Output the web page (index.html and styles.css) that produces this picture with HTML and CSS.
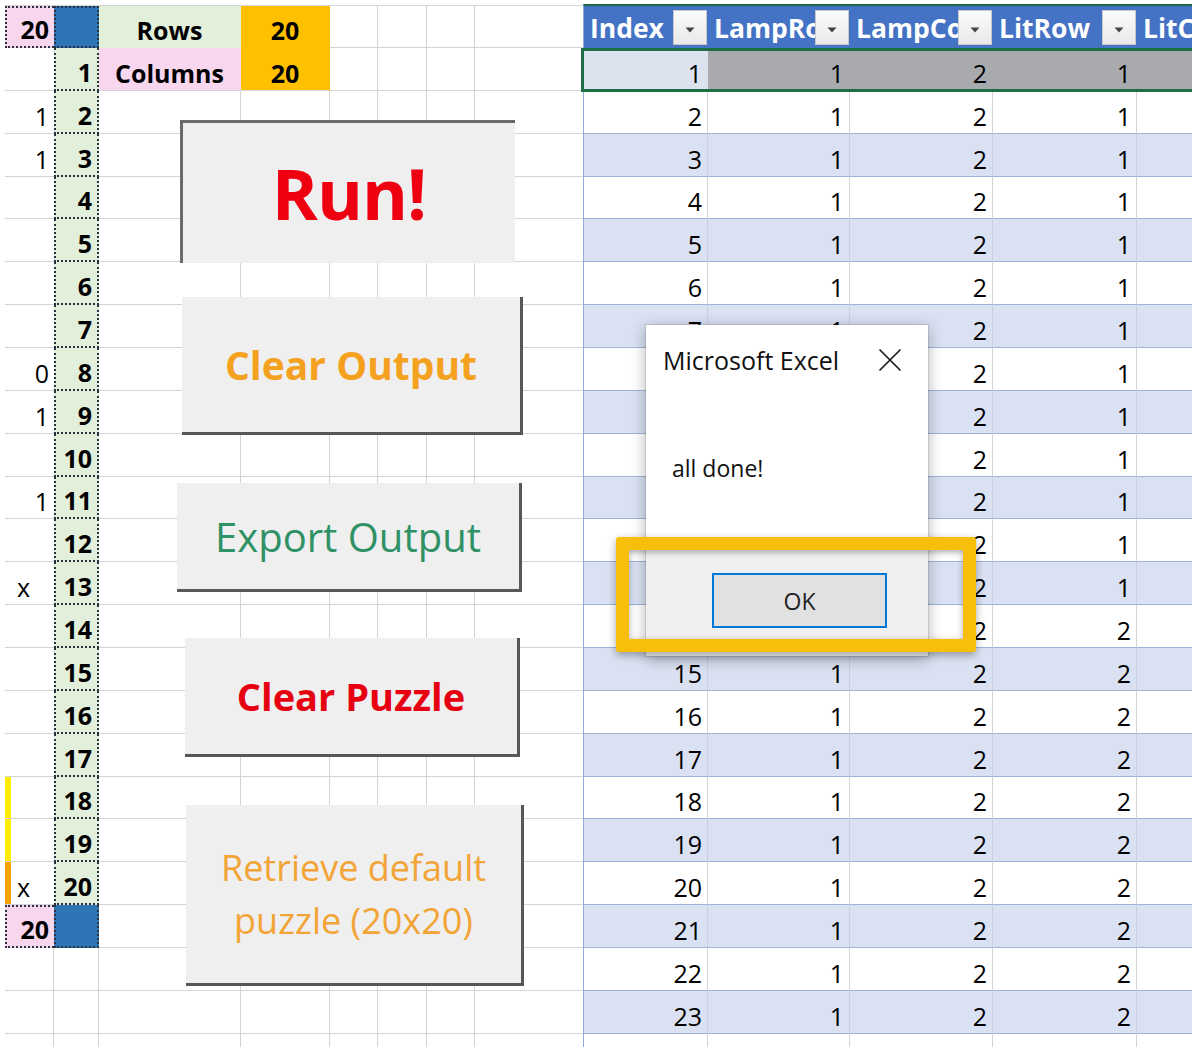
FILE: index.html
```html
<!DOCTYPE html>
<html lang="en">
<head>
<meta charset="utf-8">
<title>Lamp puzzle solver</title>
<link rel="stylesheet" href="styles.css">
</head>
<body>
<div class="stage">
  <div class="sheet">
    <div class="left">
      <div class="lrow top"><span class="pk pt nr">20</span><span class="p pt blu"></span><span class="lg">Rows</span><span class="gold t">20</span><span></span><span></span><span></span><span></span></div>
      <div class="lrow"><span class="nr"></span><span class="p">1</span><span class="lp">Columns</span><span class="gold">20</span><span></span><span></span><span></span><span></span></div>
      <div class="lrow"><span class="nr">1</span><span class="p">2</span><span></span><span></span><span></span><span></span><span></span><span></span></div>
      <div class="lrow"><span class="nr">1</span><span class="p">3</span><span></span><span></span><span></span><span></span><span></span><span></span></div>
      <div class="lrow"><span class="nr"></span><span class="p">4</span><span></span><span></span><span></span><span></span><span></span><span></span></div>
      <div class="lrow"><span class="nr"></span><span class="p">5</span><span></span><span></span><span></span><span></span><span></span><span></span></div>
      <div class="lrow"><span class="nr"></span><span class="p">6</span><span></span><span></span><span></span><span></span><span></span><span></span></div>
      <div class="lrow"><span class="nr"></span><span class="p">7</span><span></span><span></span><span></span><span></span><span></span><span></span></div>
      <div class="lrow"><span class="nr">0</span><span class="p">8</span><span></span><span></span><span></span><span></span><span></span><span></span></div>
      <div class="lrow"><span class="nr">1</span><span class="p">9</span><span></span><span></span><span></span><span></span><span></span><span></span></div>
      <div class="lrow"><span class="nr"></span><span class="p">10</span><span></span><span></span><span></span><span></span><span></span><span></span></div>
      <div class="lrow"><span class="nr">1</span><span class="p">11</span><span></span><span></span><span></span><span></span><span></span><span></span></div>
      <div class="lrow"><span class="nr"></span><span class="p">12</span><span></span><span></span><span></span><span></span><span></span><span></span></div>
      <div class="lrow"><span class="nr x">x</span><span class="p">13</span><span></span><span></span><span></span><span></span><span></span><span></span></div>
      <div class="lrow"><span class="nr"></span><span class="p">14</span><span></span><span></span><span></span><span></span><span></span><span></span></div>
      <div class="lrow"><span class="nr"></span><span class="p">15</span><span></span><span></span><span></span><span></span><span></span><span></span></div>
      <div class="lrow"><span class="nr"></span><span class="p">16</span><span></span><span></span><span></span><span></span><span></span><span></span></div>
      <div class="lrow"><span class="nr"></span><span class="p">17</span><span></span><span></span><span></span><span></span><span></span><span></span></div>
      <div class="lrow"><span class="nr yb"></span><span class="p">18</span><span></span><span></span><span></span><span></span><span></span><span></span></div>
      <div class="lrow"><span class="nr yb"></span><span class="p">19</span><span></span><span></span><span></span><span></span><span></span><span></span></div>
      <div class="lrow"><span class="nr ob x">x</span><span class="p">20</span><span></span><span></span><span></span><span></span><span></span><span></span></div>
      <div class="lrow"><span class="pk pt nr">20</span><span class="p blu"></span><span></span><span></span><span></span><span></span><span></span><span></span></div>
      <div class="lrow"><span></span><span></span><span></span><span></span><span></span><span></span><span></span><span></span></div>
      <div class="lrow"><span></span><span></span><span></span><span></span><span></span><span></span><span></span><span></span></div>
      <div class="lrow end"><span></span><span></span><span></span><span></span><span></span><span></span><span></span><span></span></div>
    </div>

    <div class="tbl">
      <div class="thead">
        <div class="th"><span class="tl">Index</span><span class="dd"><svg width="10" height="6" viewBox="0 0 10 6"><path d="M0.5 0.5h9L5 5.5z" fill="#444"/></svg></span></div>
        <div class="th"><span class="tl">LampRow</span><span class="dd"><svg width="10" height="6" viewBox="0 0 10 6"><path d="M0.5 0.5h9L5 5.5z" fill="#444"/></svg></span></div>
        <div class="th"><span class="tl">LampCol</span><span class="dd"><svg width="10" height="6" viewBox="0 0 10 6"><path d="M0.5 0.5h9L5 5.5z" fill="#444"/></svg></span></div>
        <div class="th"><span class="tl">LitRow</span><span class="dd"><svg width="10" height="6" viewBox="0 0 10 6"><path d="M0.5 0.5h9L5 5.5z" fill="#444"/></svg></span></div>
        <div class="th"><span class="tl">LitCol</span><span class="dd"><svg width="10" height="6" viewBox="0 0 10 6"><path d="M0.5 0.5h9L5 5.5z" fill="#444"/></svg></span></div>
      </div>
      <div class="tr b sel"><span>1</span><span>1</span><span>2</span><span>1</span><span></span></div>
      <div class="tr"><span>2</span><span>1</span><span>2</span><span>1</span><span></span></div>
      <div class="tr b"><span>3</span><span>1</span><span>2</span><span>1</span><span></span></div>
      <div class="tr"><span>4</span><span>1</span><span>2</span><span>1</span><span></span></div>
      <div class="tr b"><span>5</span><span>1</span><span>2</span><span>1</span><span></span></div>
      <div class="tr"><span>6</span><span>1</span><span>2</span><span>1</span><span></span></div>
      <div class="tr b"><span>7</span><span>1</span><span>2</span><span>1</span><span></span></div>
      <div class="tr"><span>8</span><span>1</span><span>2</span><span>1</span><span></span></div>
      <div class="tr b"><span>9</span><span>1</span><span>2</span><span>1</span><span></span></div>
      <div class="tr"><span>10</span><span>1</span><span>2</span><span>1</span><span></span></div>
      <div class="tr b"><span>11</span><span>1</span><span>2</span><span>1</span><span></span></div>
      <div class="tr"><span>12</span><span>1</span><span>2</span><span>1</span><span></span></div>
      <div class="tr b"><span>13</span><span>1</span><span>2</span><span>1</span><span></span></div>
      <div class="tr"><span>14</span><span>1</span><span>2</span><span>2</span><span></span></div>
      <div class="tr b"><span>15</span><span>1</span><span>2</span><span>2</span><span></span></div>
      <div class="tr"><span>16</span><span>1</span><span>2</span><span>2</span><span></span></div>
      <div class="tr b"><span>17</span><span>1</span><span>2</span><span>2</span><span></span></div>
      <div class="tr"><span>18</span><span>1</span><span>2</span><span>2</span><span></span></div>
      <div class="tr b"><span>19</span><span>1</span><span>2</span><span>2</span><span></span></div>
      <div class="tr"><span>20</span><span>1</span><span>2</span><span>2</span><span></span></div>
      <div class="tr b"><span>21</span><span>1</span><span>2</span><span>2</span><span></span></div>
      <div class="tr"><span>22</span><span>1</span><span>2</span><span>2</span><span></span></div>
      <div class="tr b"><span>23</span><span>1</span><span>2</span><span>2</span><span></span></div>
      <div class="tr end"><span></span><span></span><span></span><span></span><span></span></div>
    </div>
  </div>

  <div class="shape run">Run!</div>
  <div class="shape clear-out">Clear Output</div>
  <div class="shape export">Export Output</div>
  <div class="shape clear-puz">Clear Puzzle</div>
  <div class="shape retrieve">Retrieve default<br>puzzle (20x20)</div>

  <div class="dialog">
    <div class="dlg-head">
      <span class="dlg-title">Microsoft Excel</span>
      <svg class="dlg-x" width="24" height="24" viewBox="0 0 24 24"><path d="M1.5 1.5L22.5 22.5M22.5 1.5L1.5 22.5" stroke="#1a1a1a" stroke-width="1.7" fill="none"/></svg>
    </div>
    <div class="dlg-msg">all done!</div>
    <div class="dlg-foot"><div class="ok">OK</div></div>
  </div>
  <div class="highlight"></div>
</div>
</body>
</html>
```
FILE: styles.css
```css
body {
  margin: 0;
  background: #fff;
  font-family: "Open Sans", "Liberation Sans", sans-serif;
  color: #000;
}

.stage {
  position: relative;
  width: 1202px;
  height: 1056px;
  overflow: hidden;
}

.sheet {
  display: flex;
  margin: 4px 0 0 5px;
  width: 1187px;
  height: 1043px;
  overflow: hidden;
}

/* ---------- left worksheet area ---------- */
.left {
  flex: none;
  width: 578px;
  margin-top: 1px;
  border-top: 1px solid #d4d4d4;
}

.lrow {
  display: flex;
  height: 42.86px;
}
.lrow.top { height: 42px; }
.lrow.end { height: 13px; }

.lrow > span {
  box-sizing: border-box;
  height: 100%;
  display: flex;
  align-items: flex-end;
  justify-content: flex-end;
  padding: 0 5px 2px 0;
  border-right: 1px solid #d4d4d4;
  border-bottom: 1px solid #d4d4d4;
  font-size: 25px;
  line-height: 30px;
  white-space: nowrap;
  overflow: hidden;
}
.lrow.end > span { border-bottom: none; }

.lrow > span:nth-child(1) { width: 49px; }
.lrow > span:nth-child(2) { width: 45px; }
.lrow > span:nth-child(3) { width: 142px; justify-content: center; padding-right: 0; }
.lrow > span:nth-child(4) { width: 89px; justify-content: center; padding-right: 0; }
.lrow > span:nth-child(5) { width: 48px; }
.lrow > span:nth-child(6) { width: 49px; }
.lrow > span:nth-child(7) { width: 48px; }
.lrow > span:nth-child(8) { width: 108px; border-right: none; }

.lrow > span.nr { border-right: none; }
.lrow > span.x { justify-content: flex-start; padding-left: 12px; }
.lrow > span.yb { box-shadow: inset 6px 0 0 #ffec00; }
.lrow > span.ob { box-shadow: inset 6px 0 0 #f5a300; }

.lrow > span.p {
  background: #e2efda;
  font-weight: 700;
  border-left: 2px dotted #2a3142;
  border-right: 2px dotted #2a3142;
  border-bottom: 2px dotted #2a3142;
}
.lrow > span.pt { border-top: 2px dotted #2a3142; }
.lrow > span.blu { background: #2e75b6; }

.lrow > span.pk {
  background: #f8d7ee;
  font-weight: 700;
  border-left: 2px dotted #2a3142;
  border-bottom: 2px dotted #2a3142;
}

.lrow > span.lg {
  background: #e2efda;
  font-weight: 700;
  border-right-color: transparent;
  border-bottom-color: transparent;
}
.lrow > span.lp {
  background: #f8d7ee;
  font-weight: 700;
  border-right-color: transparent;
}
.lrow > span.gold {
  background: #ffc000;
  font-weight: 700;
  border-right-color: transparent;
}
.lrow > span.gold.t { border-bottom-color: transparent; }

/* ---------- output table ---------- */
.tbl {
  flex: none;
  width: 700px;
  border-left: 1px solid #8ea9db;
  border-top: 2px solid #1e6b41;
}

.thead {
  display: flex;
  height: 42px;
  background: #4472c4;
}
.th {
  box-sizing: border-box;
  display: flex;
  align-items: flex-start;
  color: #fff;
  font-weight: 700;
  font-size: 26.5px;
  line-height: 30px;
}
.th:nth-child(1) { width: 124px; }
.th:nth-child(2) { width: 142px; }
.th:nth-child(3) { width: 143px; }
.th:nth-child(4) { width: 144px; }
.th:nth-child(5) { width: 143px; }

.tl {
  flex: 1;
  min-width: 0;
  overflow: hidden;
  white-space: nowrap;
  padding: 7px 0 0 6px;
}
.dd {
  flex: none;
  box-sizing: border-box;
  width: 34px;
  height: 35px;
  margin: 4px 1px 0 0;
  border: 1px solid #c8c8c8;
  background: linear-gradient(#fbfbfb, #e9e9e9);
  display: flex;
  align-items: center;
  justify-content: center;
  padding-top: 4px;
}

.tr {
  display: flex;
  height: 42.86px;
}
.tr.b { background: #d9e1f2; }
.tr.end { height: 13px; }

.tr > span {
  box-sizing: border-box;
  height: 100%;
  display: flex;
  align-items: flex-end;
  justify-content: flex-end;
  padding: 0 5px 2px 0;
  border-right: 1px solid #d4d4d4;
  border-bottom: 1px solid #9fb2d8;
  font-size: 25px;
  line-height: 30px;
}
.tr.b > span { border-right-color: #c8d0e2; }
.tr.end > span { border-bottom: none; }

.tr > span:nth-child(1) { width: 124px; }
.tr > span:nth-child(2) { width: 142px; }
.tr > span:nth-child(3) { width: 143px; }
.tr > span:nth-child(4) { width: 144px; }
.tr > span:nth-child(5) { width: 143px; }

.tr.sel { position: relative; }
.tr.sel > span { background: #a8aaae; border-right-color: #a8aaae; }
.tr.sel > span:first-child { background: #dce3ef; border-right-color: #dce3ef; }
.tr.sel::after {
  content: "";
  position: absolute;
  left: -3px;
  right: -10px;
  top: 0;
  bottom: -1px;
  border: 3px solid #1f6e43;
}

/* ---------- floating macro buttons (Excel shapes) ---------- */
.shape {
  position: absolute;
  box-sizing: border-box;
  background: #efefef;
  display: flex;
  align-items: center;
  justify-content: center;
  text-align: center;
  white-space: nowrap;
}
.run {
  left: 180px;
  top: 120px;
  width: 335px;
  height: 143px;
  border-top: 3px solid #6a6a6a;
  border-left: 3px solid #6a6a6a;
  color: #ee0010;
  font-size: 70px;
  font-weight: 700;
  letter-spacing: -1px;
}
.clear-out {
  left: 182px;
  top: 297px;
  width: 341px;
  height: 138px;
  border-right: 3px solid #575757;
  border-bottom: 3px solid #575757;
  color: #f4a11f;
  font-size: 39px;
  font-weight: 700;
}
.export {
  left: 177px;
  top: 483px;
  width: 345px;
  height: 109px;
  border-right: 3px solid #575757;
  border-bottom: 3px solid #575757;
  color: #2f9166;
  font-size: 40px;
}
.clear-puz {
  left: 185px;
  top: 638px;
  width: 335px;
  height: 119px;
  border-right: 3px solid #575757;
  border-bottom: 3px solid #575757;
  color: #e60012;
  font-size: 38px;
  font-weight: 700;
}
.retrieve {
  left: 186px;
  top: 805px;
  width: 338px;
  height: 181px;
  border-right: 3px solid #575757;
  border-bottom: 3px solid #575757;
  color: #f2a436;
  font-size: 36px;
  line-height: 53px;
}

/* ---------- message box ---------- */
.dialog {
  position: absolute;
  left: 646px;
  top: 325px;
  width: 282px;
  height: 331px;
  display: flex;
  flex-direction: column;
  background: #fff;
  box-shadow: 0 0 0 1px rgba(0, 0, 0, 0.1), 0 3px 14px rgba(0, 0, 0, 0.3);
}
.dlg-head {
  display: flex;
  align-items: center;
  justify-content: space-between;
  padding: 18px 26px 0 17px;
  height: 34px;
}
.dlg-title {
  font-size: 25px;
  line-height: 34px;
  color: #111;
}
.dlg-x { flex: none; }
.dlg-msg {
  padding: 76px 0 0 26px;
  font-size: 23px;
  line-height: 31px;
  color: #111;
}
.dlg-foot {
  margin-top: auto;
  box-sizing: border-box;
  height: 108px;
  background: #f0f0f0;
  padding: 25px 0 0 66px;
}
.ok {
  box-sizing: border-box;
  width: 175px;
  height: 55px;
  border: 2px solid #0078d7;
  background: #e1e1e1;
  display: flex;
  align-items: center;
  justify-content: center;
  font-size: 23px;
  color: #222;
}

/* ---------- annotation highlight ---------- */
.highlight {
  position: absolute;
  left: 616px;
  top: 537px;
  width: 360px;
  height: 115px;
  box-sizing: border-box;
  border: 13px solid #f8be0c;
  border-radius: 3px;
  box-shadow: 0 3px 8px rgba(0, 0, 0, 0.35), inset 0 2px 6px rgba(0, 0, 0, 0.35);
}
```
